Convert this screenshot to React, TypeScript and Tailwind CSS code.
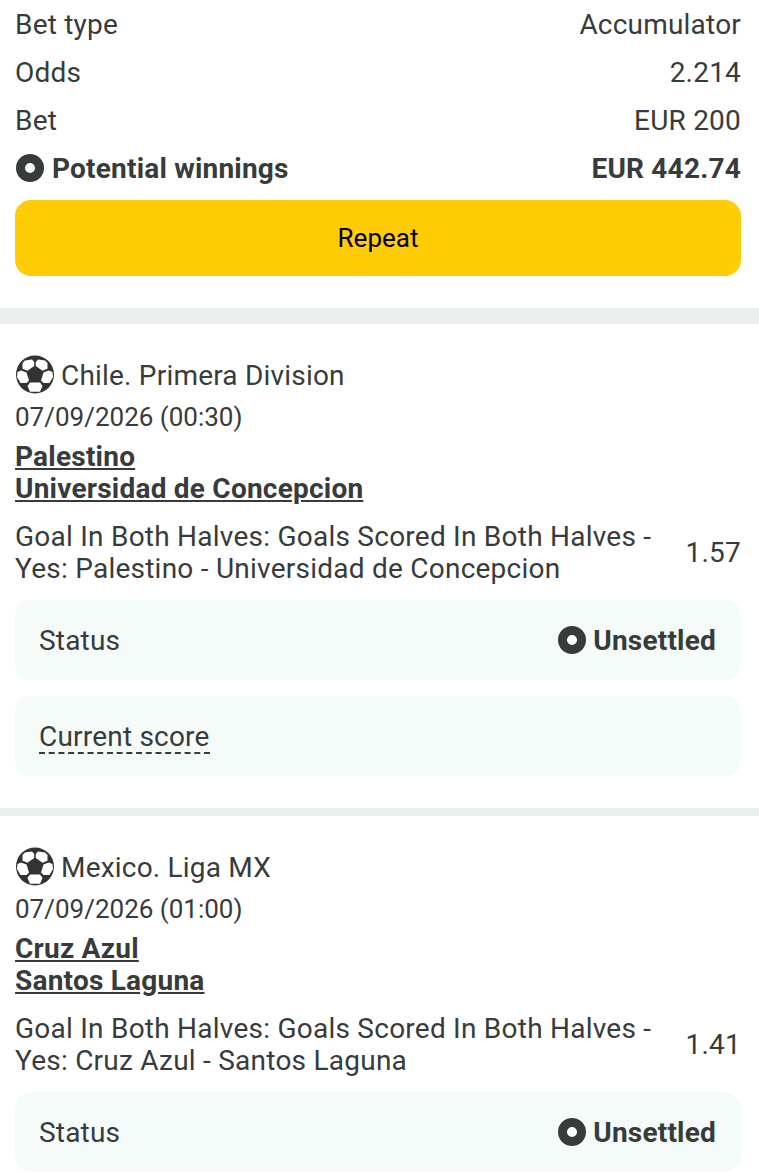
import React from "react";

const dark = "text-[#383b3b]";

function Ball() {
  return (
    <svg width="40" height="40" viewBox="0 0 40 40" className="shrink-0">
      <circle cx="20" cy="19.5" r="19" fill="#333" />
      <g fill="#fff">
        <polygon points="10,5.5 17,4.5 19.2,7 19.2,11 12.5,15.8 7.5,13.8 7.5,8" />
        <polygon points="30,5.5 23,4.5 20.8,7 20.8,11 27.5,15.8 32.5,13.8 32.5,8" />
        <polygon points="6.2,15.5 11.5,17.5 14,25.5 11.5,28 5.5,28 2,22 2.5,17" />
        <polygon points="33.8,15.5 28.5,17.5 26,25.5 28.5,28 34.5,28 38,22 37.5,17" />
        <polygon points="15,27.5 25,27.5 27.5,31 25,36.8 15,36.8 12.5,31" />
      </g>
    </svg>
  );
}

function Dot() {
  return <span className="block w-7 h-7 shrink-0 rounded-full border-[9px] border-[#383b3b] bg-white" />;
}

function Row({ label, value }: { label: string; value: string }) {
  return (
    <div className="flex justify-between h-8 leading-[34px]">
      <span>{label}</span>
      <span>{value}</span>
    </div>
  );
}

function Match({ league, date, home, away, market, odds, score }: { league: string; date: string; home: string; away: string; market: React.ReactNode; odds: string; score?: boolean }) {
  return (
    <div className="pl-[15px] pr-[18px]">
      <div className="flex items-center gap-1.5 h-10">
        <Ball />
        <span className="mt-[2px]">{league}</span>
      </div>
      <div className="leading-8 h-8 mt-[6px] text-[26px] tracking-normal">{date}</div>
      <div className="mt-[7px] font-bold underline leading-[34px] underline-offset-2 tracking-[0.22px]">
        <div className="h-8">{home}</div>
        <div className="h-8">{away}</div>
      </div>
      <div className="mt-4 flex items-center justify-between">
        <div className="leading-[34px] tracking-[0.24px] whitespace-nowrap [&>span]:block [&>span]:h-8">{market}</div>
        <div className="mt-[2px]">{odds}</div>
      </div>
      <div className="mt-4 h-20 rounded-2xl bg-[#f4fbf8] pl-6 pr-6 flex items-center justify-between">
        <span className="mt-[2px]">Status</span>
        <span className="flex items-center gap-2 font-bold">
          <Dot />
          <span className="mt-[2px] -ml-px mr-px">Unsettled</span>
        </span>
      </div>
      {score && (
        <div className="mt-4 h-20 rounded-2xl bg-[#f4fbf8] pl-6 flex items-center">
          <span className="border-b-2 border-dashed border-[#383b3b] leading-[30px] mt-[3px]">Current score</span>
        </div>
      )}
    </div>
  );
}

export default function App() {
  return (
    <div className={`w-[759px] h-[1174px] overflow-hidden bg-white text-[28px] tracking-[0.2px] ${dark} font-['Roboto',sans-serif]`}>
      <div className="pl-[15px] pr-[18px] pt-2 flex flex-col gap-4">
        <Row label="Bet type" value="Accumulator" />
        <Row label="Odds" value="2.214" />
        <Row label="Bet" value="EUR 200" />
        <div className="flex justify-between items-center h-8 font-bold">
          <span className="flex items-center gap-2 pl-px">
            <Dot />
            <span className="mt-[2px]">Potential winnings</span>
          </span>
          <span className="mt-[2px]">EUR 442.74</span>
        </div>
        <button className="h-[76px] rounded-2xl bg-[#ffcc06] text-black text-[26px] tracking-normal leading-[34px]">Repeat</button>
      </div>
      <div className="mt-8 h-4 bg-[#e9f0ee]" />
      <div className="pt-[31px] pb-8">
        <Match league="Chile. Primera Division" date="07/09/2026 (00:30)" home="Palestino" away="Universidad de Concepcion" market={<><span>Goal In Both Halves: Goals Scored In Both Halves -</span><span>Yes: Palestino - Universidad de Concepcion</span></>} odds="1.57" score />
      </div>
      <div className="h-2 bg-[#e9f0ee]" />
      <div className="pt-[31px]">
        <Match league="Mexico. Liga MX" date="07/09/2026 (01:00)" home="Cruz Azul" away="Santos Laguna" market={<><span>Goal In Both Halves: Goals Scored In Both Halves -</span><span>Yes: Cruz Azul - Santos Laguna</span></>} odds="1.41" />
      </div>
    </div>
  );
}
